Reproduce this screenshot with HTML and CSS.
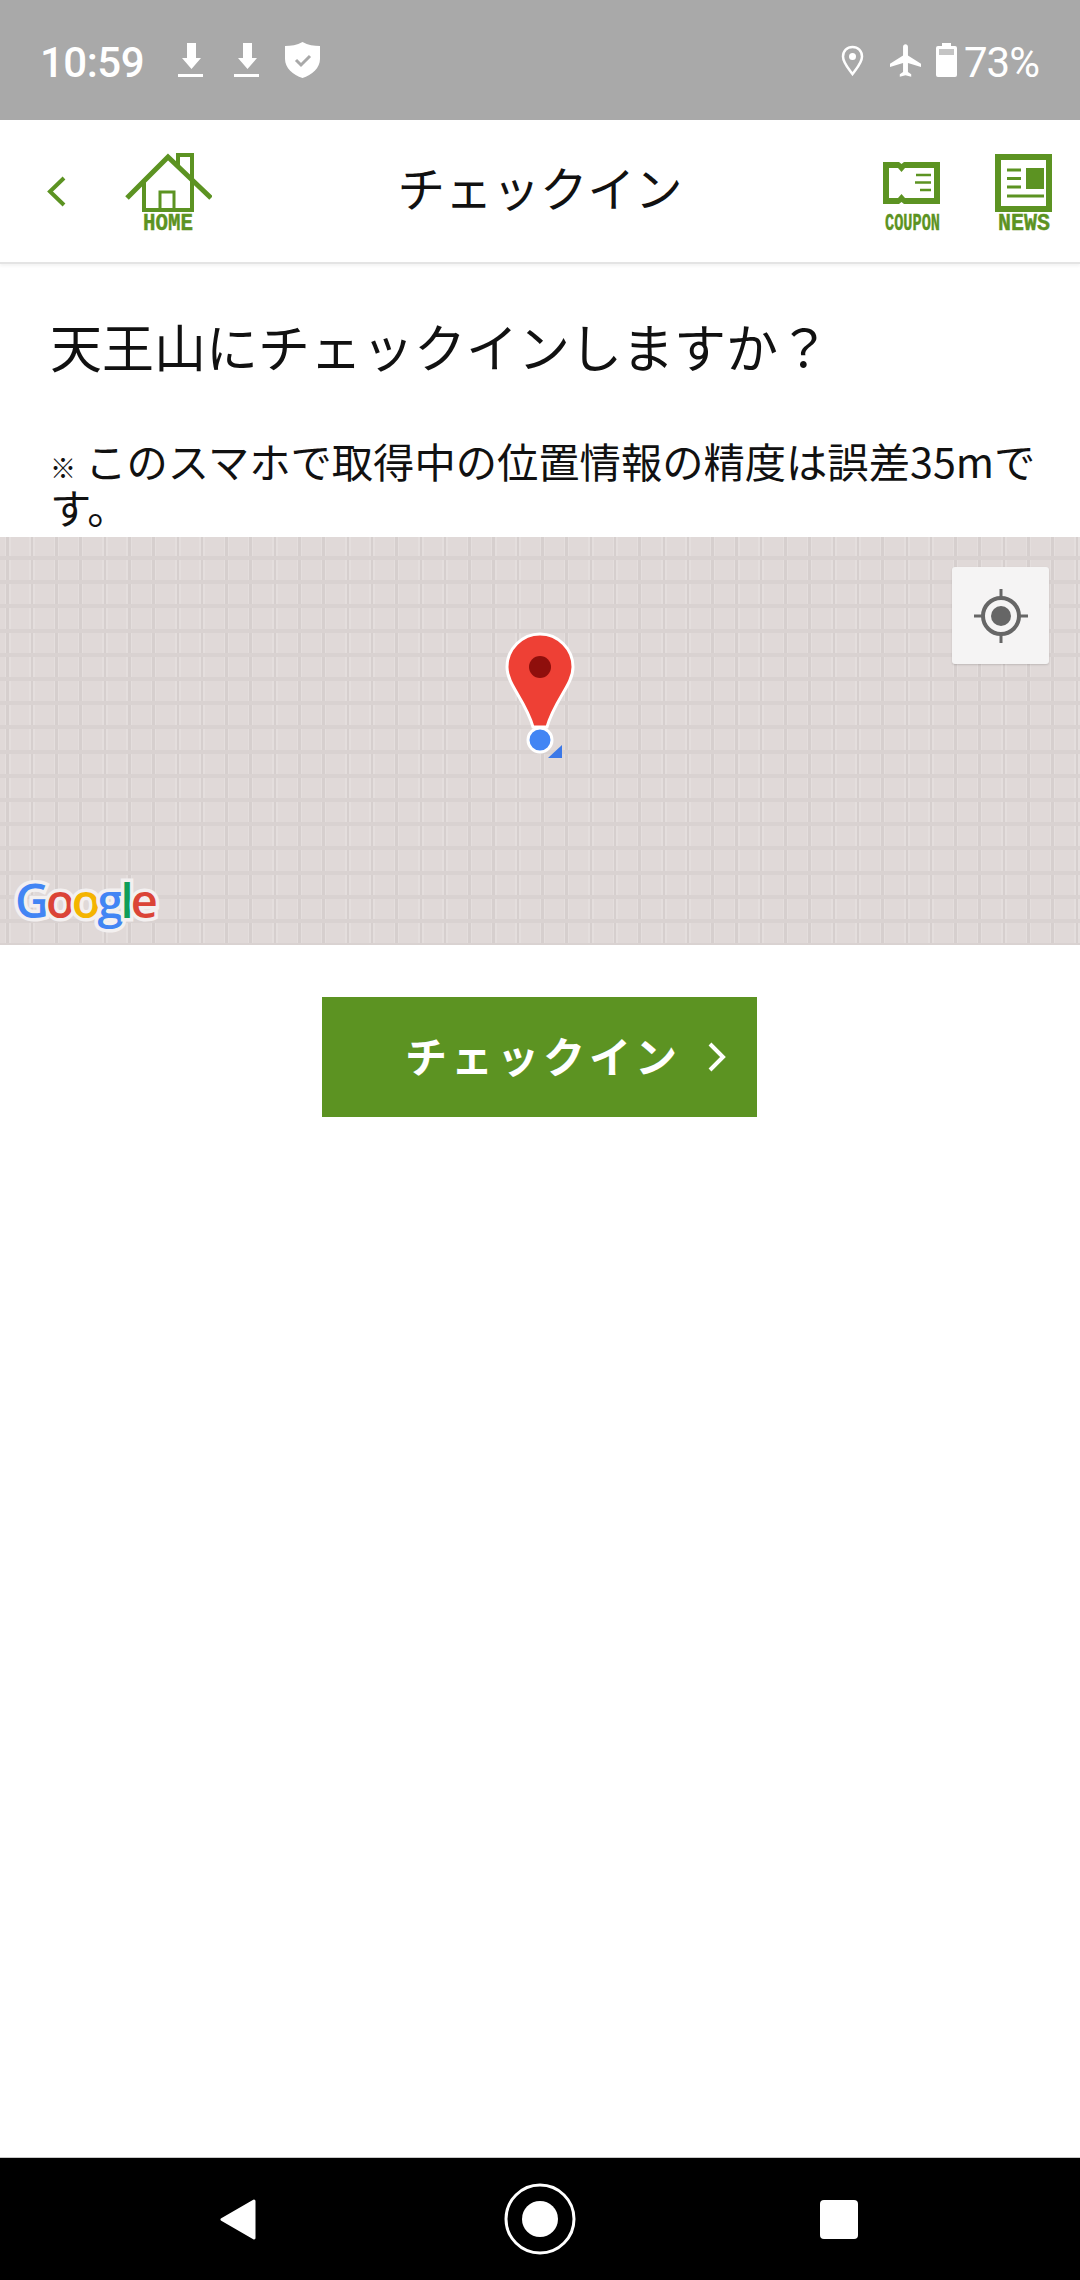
FILE: index.html
```html
<!DOCTYPE html>
<html lang="ja">
<head>
    <meta charset="UTF-8">
    <meta name="viewport" content="width=device-width, initial-scale=1.0">
    <title>チェックイン</title>
    <link rel="stylesheet" href="styles.css">
</head>
<body>
    <div class="status-bar">
        <span class="status-time">10:59</span>
        <svg class="icon-download" viewBox="0 0 25 34"><path d="M9 0h9v15h5L13.500 26 4 15h5z"/><rect y="31" width="25" height="3"/></svg>
        <svg class="icon-download second" viewBox="0 0 25 34"><path d="M9 0h9v15h5L13.500 26 4 15h5z"/><rect y="31" width="25" height="3"/></svg>
        <svg class="icon-shield" viewBox="0 0 35 36"><path d="M17.500 0C23 3 29 4 35 4v13c0 9-8 16-17.500 19C8 33 0 26 0 17V4c6 0 12-1 17.500-4z" fill="#fff"/><path d="M11 18l5 5 9-9" fill="none" stroke="#a9a9a9" stroke-width="3"/></svg>
        <span class="status-space"></span>
        <svg class="icon-location" viewBox="0 0 23 31"><path d="M11.500 2C6 2 2 6 2 11.500 2 18 8 24 11.500 29 15 24 21 18 21 11.500 21 6 17 2 11.500 2z" fill="none" stroke="#fff" stroke-width="2.500"/><circle cx="11.500" cy="11.500" r="3.500" fill="#fff"/></svg>
        <svg class="icon-plane" viewBox="2 2 19 20"><path d="M21 16v-2l-8-5V3.500c0-.83-.67-1.500-1.500-1.500S10 2.670 10 3.500V9l-8 5v2l8-2.500V19l-2 1.500V22l3.500-1 3.500 1v-1.500L13 19v-5.500l8 2.500z"/></svg>
        <svg class="icon-battery" viewBox="0 0 21 34"><path d="M6 0h9v3h4a2 2 0 0 1 2 2v27a2 2 0 0 1-2 2H2a2 2 0 0 1-2-2V5a2 2 0 0 1 2-2h4z" fill="#fff"/><rect x="3" y="6" width="15" height="6" fill="#c4c4c4"/></svg>
        <span class="status-battery">73%</span>
    </div>

    <header class="app-header">
        <div class="header-side left">
            <svg class="icon-back" viewBox="0 0 19 31"><path d="M17 2L3 15.500 17 29" fill="none" stroke="#5c9322" stroke-width="4"/></svg>
            <svg class="icon-home" viewBox="0 0 87 85">
                <g fill="none" stroke="#5c9322" stroke-width="4">
                    <path d="M2 45L43 4l43 41" stroke-width="5"/>
                    <path d="M19 29v28h48V2H53v12"/>
                    <path d="M35 57V39h14v18" stroke-width="3"/>
                </g>
                <text x="18" y="77" class="icon-label" textLength="50" lengthAdjust="spacingAndGlyphs">HOME</text>
            </svg>
        </div>
        <h1 class="page-title">チェックイン</h1>
        <div class="header-side right">
            <svg class="icon-coupon" viewBox="0 0 60 80">
                <path fill-rule="evenodd" fill="#5c9322" d="M0 0h16l2.500 2 2.500-2h36v42H21l-2.500-2-2.500 2H0zM6 6v30h9l3.500-4 3.500 4h29V6H22l-3.500 4-3.500-4z"/>
                <path d="M33 13h15M32 20.500h16M37 28h11" stroke="#5c9322" stroke-width="2.500"/>
                <text x="2" y="68" class="icon-label" textLength="55" lengthAdjust="spacingAndGlyphs">COUPON</text>
            </svg>
            <svg class="icon-news" viewBox="0 0 57 85">
                <rect x="3" y="3" width="51" height="52" fill="none" stroke="#5c9322" stroke-width="6"/>
                <rect x="31" y="14" width="18" height="21" fill="#5c9322"/>
                <path d="M12 16h14M12 24.500h14M12 33h14M12 42h37" stroke="#5c9322" stroke-width="3"/>
                <text x="3" y="76" class="icon-label" textLength="52" lengthAdjust="spacingAndGlyphs">NEWS</text>
            </svg>
        </div>
    </header>

    <main class="content">
        <h2 class="question">天王山にチェックインしますか？</h2>
        <p class="accuracy"><span class="mark">※</span> このスマホで取得中の位置情報の精度は誤差35mです。</p>

        <div class="map">
            <svg class="map-pin" viewBox="0 0 80 140">
                <path d="M40 7C22 7 7 22 7 40c0 18 18 32 26 60h14c8-28 26-42 26-60C73 22 58 7 40 7z" fill="#ee4035" stroke="#fff" stroke-width="3"/>
                <circle cx="40" cy="40" r="11" fill="#8f0f0c"/>
                <path d="M62 118v13H48z" fill="#3b78e7"/>
                <circle cx="40" cy="113" r="12" fill="#4285f4" stroke="#fff" stroke-width="3"/>
            </svg>
            <div class="locate-button">
                <svg class="icon-locate" viewBox="0 0 54 54">
                    <circle cx="27" cy="27" r="18" fill="none" stroke="#666" stroke-width="4"/>
                    <circle cx="27" cy="27" r="10" fill="#666"/>
                    <path d="M27 0v9M27 45v9M0 27h9M45 27h9" stroke="#666" stroke-width="3"/>
                </svg>
            </div>
            <div class="google-logo"><span class="blue">G</span><span class="red">o</span><span class="yellow">o</span><span class="blue">g</span><span class="green">l</span><span class="red">e</span></div>
        </div>

        <button class="checkin-button">
            <span class="checkin-label">チェックイン</span>
            <svg class="icon-next" viewBox="0 0 18 30"><path d="M2 2l13 13L2 28" fill="none" stroke="#fff" stroke-width="4"/></svg>
        </button>
    </main>

    <nav class="nav-bar">
        <svg class="nav-back" viewBox="0 0 36 41"><path d="M34 2L2 20.500 34 39z" fill="#fff" stroke="#fff" stroke-width="3" stroke-linejoin="round"/></svg>
        <svg class="nav-home" viewBox="0 0 72 72"><circle cx="36" cy="36" r="34" fill="none" stroke="#fff" stroke-width="3"/><circle cx="36" cy="36" r="18" fill="#fff"/></svg>
        <div class="nav-recent"></div>
    </nav>
</body>
</html>
```

FILE: styles.css
```css
body {
    margin: 0;
    width: 1080px;
    height: 2280px;
    display: flex;
    flex-direction: column;
    background-color: #fff;
    font-family: "Noto Sans CJK JP", "Noto Sans", sans-serif;
    color: #111;
    overflow: hidden;
}

/* status bar */
.status-bar {
    height: 120px;
    flex-shrink: 0;
    box-sizing: border-box;
    padding: 0 41px 0 40px;
    display: flex;
    align-items: center;
    background-color: #a9a9a9;
    color: #fff;
    font-family: Roboto, sans-serif;
    font-size: 42px;
    fill: #fff;
}
.status-time {
    width: 138px;
    padding-top: 4px;
    letter-spacing: -0.5px;
    font-weight: 500;
}
.status-space {
    flex-grow: 1;
}
.icon-download {
    width: 25px;
    height: 34px;
}
.icon-download.second {
    margin-left: 31px;
}
.icon-shield {
    width: 35px;
    height: 36px;
    margin-left: 26px;
}
.icon-location {
    width: 23px;
    height: 31px;
}
.icon-plane {
    width: 31px;
    height: 33px;
    margin-left: 26px;
}
.icon-battery {
    width: 21px;
    height: 34px;
    margin-left: 15px;
}
.status-battery {
    margin-left: 7px;
    padding-top: 4px;
    letter-spacing: -1px;
}

/* app header */
.app-header {
    height: 142px;
    flex-shrink: 0;
    display: flex;
    align-items: center;
    border-bottom: 2px solid #e4e4e4;
    box-shadow: 0 2px 3px rgba(0, 0, 0, 0.05);
}
.header-side {
    width: 212px;
    height: 100%;
    box-sizing: border-box;
    display: flex;
    flex-shrink: 0;
}
.header-side.left {
    padding-left: 47px;
}
.header-side.right {
    padding-right: 28px;
    justify-content: flex-end;
}
.page-title {
    flex-grow: 1;
    margin: 0;
    padding-bottom: 8px;
    text-align: center;
    font-size: 47.500px;
    font-weight: 400;
    line-height: 132px;
}
.icon-back {
    width: 19px;
    height: 31px;
    margin-top: 56px;
}
.icon-home {
    width: 87px;
    height: 85px;
    margin: 33px 0 0 59px;
}
.icon-coupon {
    width: 60px;
    height: 80px;
    margin-top: 42px;
}
.icon-news {
    width: 57px;
    height: 85px;
    margin: 34px 0 0 52px;
}
.icon-label {
    font-family: "Liberation Mono", monospace;
    font-weight: 700;
    font-size: 23px;
    fill: #5c9322;
    stroke: #5c9322;
    stroke-width: 0.4px;
}

/* content */
.content {
    flex-grow: 1;
    display: flex;
    flex-direction: column;
}
.question {
    margin: 0;
    padding: 46px 40px 0 50px;
    font-size: 52px;
    font-weight: 400;
    line-height: 72px;
}
.accuracy {
    margin: 0;
    padding: 55px 40px 0 50px;
    font-size: 41.300px;
    line-height: 46px;
    height: 100px;
}
.mark {
    font-size: 26px;
    line-height: 1;
}
.map {
    position: relative;
    height: 408px;
    flex-shrink: 0;
    background-color: #e0d9d8;
    background-image:
        repeating-linear-gradient(to bottom, transparent 0, transparent 19px, #d9d2d1 19px, #d9d2d1 23px, transparent 23px, transparent 24.200px),
        repeating-linear-gradient(to right, #e0d9d8 0, #e0d9d8 5px, #e4dedd 5px, #e4dedd 6.500px, #d6cfce 6.500px, #d6cfce 9px, #e4dedd 9px, #e4dedd 10.500px, #e0d9d8 10.500px, #e0d9d8 24.300px);
}
.map-pin {
    position: absolute;
    left: 500px;
    top: 90px;
    width: 80px;
    height: 140px;
}
.locate-button {
    position: absolute;
    left: 952px;
    top: 30px;
    width: 97px;
    height: 97px;
    display: flex;
    align-items: center;
    justify-content: center;
    background-color: #f5f4f4;
    border-radius: 3px;
    box-shadow: 0 1px 2px rgba(0, 0, 0, 0.15);
}
.icon-locate {
    width: 54px;
    height: 54px;
}
.google-logo {
    position: absolute;
    left: 15px;
    top: 333px;
    font-family: "Open Sans", sans-serif;
    font-size: 47px;
    font-weight: 600;
    line-height: 60px;
    letter-spacing: -3px;
    -webkit-text-stroke: 7px #f3f0f0;
    paint-order: stroke fill;
}
.blue {
    color: #4285f4;
}
.red {
    color: #db4437;
}
.yellow {
    color: #f4b400;
}
.green {
    color: #0f9d58;
}
.checkin-button {
    width: 435px;
    height: 120px;
    margin: 52px 0 0 322px;
    padding: 0 0 0 83px;
    border: none;
    display: flex;
    align-items: center;
    background-color: #5c9322;
    color: #fff;
    font-family: inherit;
    font-size: 42px;
    font-weight: 700;
    letter-spacing: 4px;
}
.checkin-label {
    margin-bottom: 6px;
}
.icon-next {
    width: 18px;
    height: 30px;
    margin-left: 27px;
}

/* android nav bar */
.nav-bar {
    height: 123px;
    flex-shrink: 0;
    box-sizing: border-box;
    border-top: 1px solid #c8c8c8;
    padding: 0 222px 0 220px;
    display: flex;
    align-items: center;
    justify-content: space-between;
    background-color: #000;
}
.nav-back {
    width: 36px;
    height: 41px;
}
.nav-home {
    width: 72px;
    height: 72px;
    margin-left: 4px;
}
.nav-recent {
    width: 38px;
    height: 39px;
    border-radius: 4px;
    background-color: #fff;
}
```
